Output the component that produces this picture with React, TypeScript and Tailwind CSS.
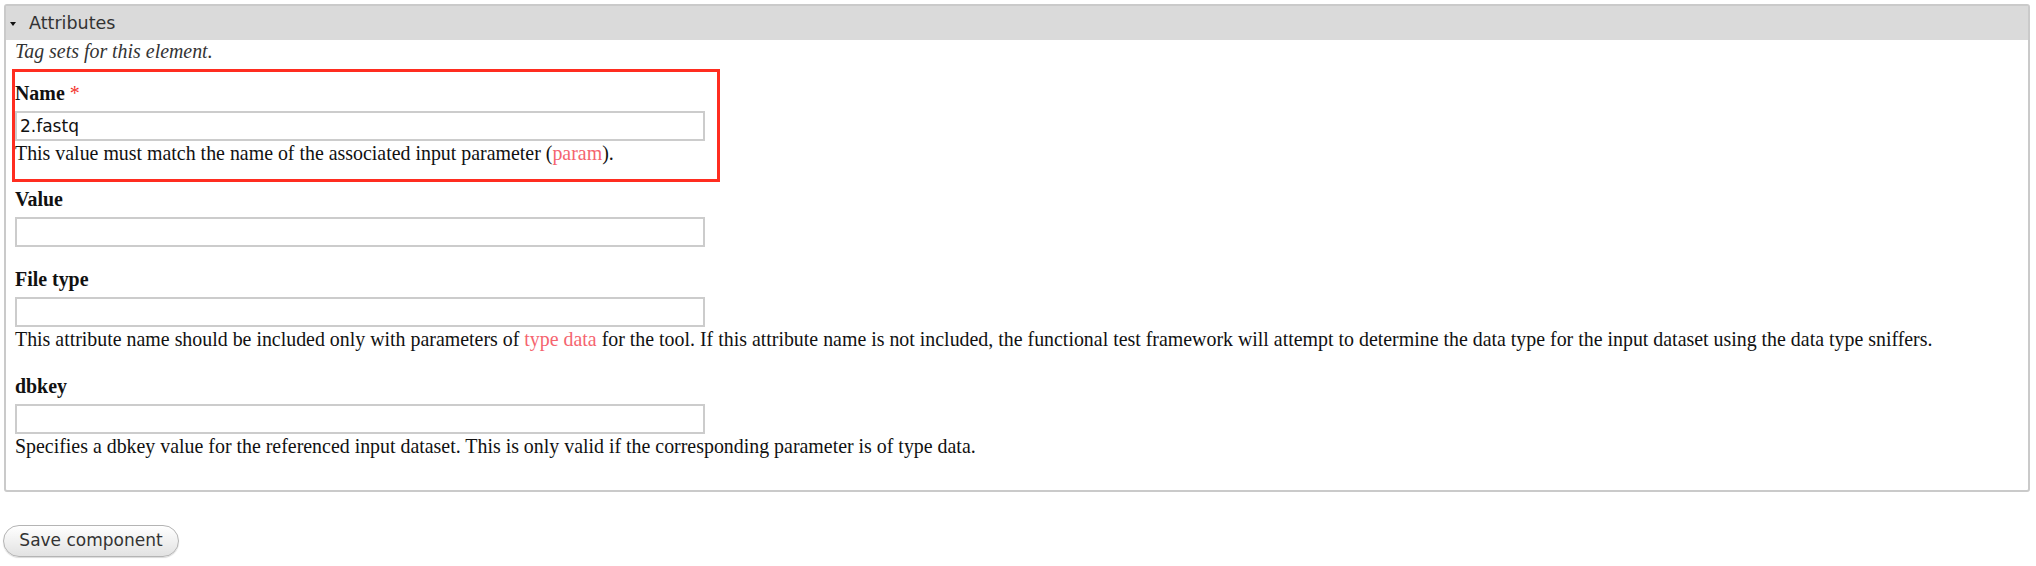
import type { ReactNode } from 'react';

const serif = 'font-["Liberation_Serif",serif]';
const sans = 'font-["DejaVu_Sans",sans-serif]';

function Field({ label, required, value, help, className = '' }: {
  label: string;
  required?: boolean;
  value?: string;
  help?: ReactNode;
  className?: string;
}) {
  return (
    <div className={className}>
      <div className="text-[19.9px] leading-[22px] font-bold text-[#111]">
        {label}
        {required && <span className="ml-[5px] font-normal text-[#f3322c]">*</span>}
      </div>
      <input
        readOnly
        value={value ?? ''}
        className={`mt-[7px] block h-[30px] w-[690px] border-2 border-[#cccccc] bg-white px-[3px] text-[17px] text-[#111] outline-none ${sans}`}
      />
      {help && <p className="mt-px text-[19.9px] leading-[22px] text-[#111]">{help}</p>}
    </div>
  );
}

function Link({ children }: { children: ReactNode }) {
  return <a className="text-[#f5646f]">{children}</a>;
}

export default function App() {
  return (
    <div className={`min-h-[566px] bg-white pt-[4px] pl-[4px] pr-[6px] ${serif}`}>
      <fieldset className="rounded-[3px] border-2 border-[#cacaca]">
        <div className={`flex h-[34px] items-center bg-[#dadada] ${sans}`}>
          <svg width="6" height="4" viewBox="0 0 6 4" className="ml-[4px] mt-[1px]">
            <polygon points="0,0 6,0 3,4" fill="#111" />
          </svg>
          <span className="ml-[13px] text-[17.5px] text-[#333]">Attributes</span>
        </div>
        <div className="pl-[9px] pb-[33px]">
          <p className="text-[19.9px] leading-[22px] italic text-[#333]">Tag sets for this element.</p>
          <div className="-ml-[3px] mt-[7px] w-[708px] border-[3px] border-[#ff2d20] pt-[10px] pb-[15px]">
            <Field
              label="Name"
              required
              value="2.fastq"
              help={<>This value must match the name of the associated input parameter (<Link>param</Link>).</>}
            />
          </div>
          <Field label="Value" className="mt-[6px]" />
          <Field
            label="File type"
            className="mt-[21px]"
            help={<>This attribute name should be included only with parameters of <Link>type data</Link> for the tool. If this attribute name is not included, the functional test framework will attempt to determine the data type for the input dataset using the data type sniffers.</>}
          />
          <Field
            label="dbkey"
            className="mt-[25px]"
            help="Specifies a dbkey value for the referenced input dataset. This is only valid if the corresponding parameter is of type data."
          />
        </div>
      </fieldset>
      <button
        className={`mt-[33px] ml-[-1px] h-[32px] w-[176px] rounded-full border border-[#b4b4b4] bg-gradient-to-b from-white to-[#e2e2e2] text-[17px] text-[#333] shadow-[0_1px_1px_rgba(0,0,0,0.15)] ${sans}`}
      >
        Save component
      </button>
    </div>
  );
}
